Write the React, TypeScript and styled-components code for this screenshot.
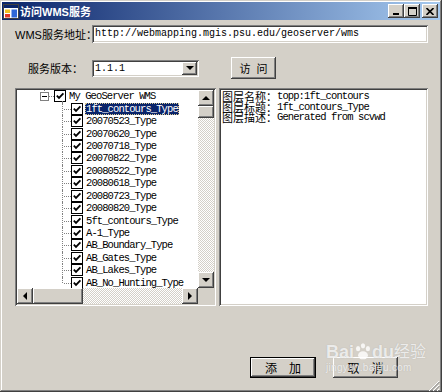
import React from 'react';
import styled, { createGlobalStyle, css } from 'styled-components';

const GlobalStyle = createGlobalStyle`
  html, body {
    margin: 0;
    padding: 0;
    background: #d4d0c8;
  }
  body {
    font-family: "Liberation Sans", "Noto Sans CJK SC", sans-serif;
    color: #000;
  }
`;

const raised = css`
  box-shadow: inset -1px -1px #404040, inset 1px 1px #ffffff, inset -2px -2px #808080, inset 2px 2px #d4d0c8;
`;

const sunken = css`
  box-shadow: inset 1px 1px #808080, inset -1px -1px #ffffff, inset 2px 2px #404040, inset -2px -2px #d4d0c8;
`;

const monoText = css`
  font-family: "Liberation Mono", "Noto Sans CJK SC", monospace;
  font-size: 10.5px;
  letter-spacing: -0.9px;
`;

const Window = styled.div`
  position: relative;
  width: 442px;
  height: 392px;
  box-sizing: border-box;
  padding: 2px;
  background: #d4d0c8;
  box-shadow: inset -1px -1px #404040, inset 1px 1px #d4d0c8, inset -2px -2px #808080, inset 2px 2px #ffffff;
  display: flex;
  flex-direction: column;
  overflow: hidden;
`;

const TitleBar = styled.div`
  height: 18px;
  display: flex;
  align-items: center;
  padding: 0 2px 0 1px;
  background: linear-gradient(to right, #0a246a, #a6caf0);
`;

const TitleText = styled.span`
  margin-left: 1px;
  color: #fff;
  font-size: 11px;
  font-weight: 700;
  white-space: nowrap;
`;

const Controls = styled.div`
  margin-left: auto;
  display: flex;
  align-items: center;
`;

const CtrlButton = styled.div<{ $gap?: boolean }>`
  width: 16px;
  height: 14px;
  margin-left: ${p => (p.$gap ? '2px' : '0')};
  background: #d4d0c8;
  ${raised};
  display: flex;
  align-items: center;
  justify-content: center;
`;

const Body = styled.div`
  flex: 1;
  display: flex;
  flex-direction: column;
  padding: 5px 12px 0 13px;
`;

const FieldRow = styled.div<{ $top?: number }>`
  display: flex;
  align-items: center;
  gap: 9px;
  margin-top: ${p => p.$top ?? 0}px;
`;

const Label = styled.span`
  width: 68px;
  flex-shrink: 0;
  text-align: right;
  font-size: 11px;
  white-space: nowrap;
`;

const TextField = styled.div`
  width: 336px;
  height: 18px;
  box-sizing: border-box;
  padding: 2px 3px;
  background: #fff;
  ${sunken};
  font-family: "Liberation Mono", monospace;
  font-size: 10px;
  line-height: 14px;
  white-space: nowrap;
  overflow: hidden;
`;

const Select = styled.div`
  width: 107px;
  height: 17px;
  box-sizing: border-box;
  padding: 2px;
  background: #fff;
  ${sunken};
  display: flex;
  align-items: stretch;
`;

const SelectValue = styled.span`
  flex: 1;
  padding-left: 1px;
  font-family: "Liberation Mono", monospace;
  font-size: 10px;
  line-height: 13px;
`;

const DropButton = styled.div`
  width: 15px;
  background: #d4d0c8;
  ${raised};
  display: flex;
  align-items: center;
  justify-content: center;
`;

const PushButton = styled.div<{ $w: number; $h: number; $default?: boolean }>`
  width: ${p => p.$w}px;
  height: ${p => p.$h}px;
  box-sizing: border-box;
  background: #d4d0c8;
  ${raised};
  ${p => p.$default && css`
    border: 1px solid #000;
  `}
  display: flex;
  align-items: center;
  justify-content: center;
  font-size: 12px;
  white-space: pre;
`;

const VisitButton = styled(PushButton)`
  margin-left: 23px;
  font-size: 11px;
`;

const Panels = styled.div`
  margin-top: 9px;
  display: flex;
  gap: 3px;
  height: 218px;
`;

const TreeBox = styled.div`
  width: 201px;
  box-sizing: border-box;
  padding: 2px;
  background: #fff;
  ${sunken};
  display: grid;
  grid-template-columns: 1fr 16px;
  grid-template-rows: 1fr 16px;
  overflow: hidden;
`;

const TreeList = styled.div`
  overflow: hidden;
`;

const TreeRow = styled.div<{ $indent: number }>`
  height: 12.45px;
  display: flex;
  align-items: center;
  padding-left: ${p => p.$indent}px;
  white-space: nowrap;
`;

const ExpandBox = styled.span`
  position: relative;
  width: 9px;
  height: 9px;
  box-sizing: border-box;
  border: 1px solid #808080;
  background: #fff;
  flex-shrink: 0;
  &::before {
    content: '';
    position: absolute;
    left: 3px;
    bottom: 100%;
    height: 3px;
    border-left: 1px dotted #808080;
  }
  &::after {
    content: '';
    position: absolute;
    left: 1px;
    top: 3px;
    width: 5px;
    height: 1px;
    background: #000;
  }
`;

const Stub = styled.span<{ $w: number }>`
  width: ${p => p.$w}px;
  align-self: center;
  border-top: 1px dotted #808080;
  flex-shrink: 0;
`;

const Branch = styled.span<{ $last?: boolean }>`
  position: relative;
  width: 9px;
  align-self: stretch;
  flex-shrink: 0;
  &::before {
    content: '';
    position: absolute;
    left: 0;
    top: 0;
    height: ${p => (p.$last ? '50%' : '100%')};
    border-left: 1px dotted #808080;
  }
  &::after {
    content: '';
    position: absolute;
    left: 2px;
    right: 0;
    top: 50%;
    border-top: 1px dotted #808080;
  }
`;

const CheckBox = styled.span<{ $root?: boolean }>`
  position: relative;
  width: 12px;
  height: 12px;
  box-sizing: border-box;
  border: 1px solid #000;
  background: #fff;
  margin-right: 2px;
  flex-shrink: 0;
  display: flex;
  align-items: center;
  justify-content: center;
  ${p => p.$root && css`
    &::after {
      content: '';
      position: absolute;
      left: 7px;
      top: 100%;
      height: 3px;
      border-left: 1px dotted #808080;
    }
  `}
`;

const NodeText = styled.span<{ $selected?: boolean }>`
  ${monoText};
  line-height: 12px;
  padding: 0 1px;
  ${p => p.$selected && css`
    background: #0a246a;
    color: #fff;
    outline: 1px dotted #d8c890;
    outline-offset: -1px;
  `}
`;

const VScroll = styled.div`
  display: flex;
  flex-direction: column;
`;

const HScroll = styled.div`
  display: flex;
`;

const ScrollButton = styled.div`
  width: 16px;
  height: 16px;
  flex-shrink: 0;
  box-sizing: border-box;
  background: #d4d0c8;
  ${raised};
  display: flex;
  align-items: center;
  justify-content: center;
`;

const Thumb = styled.div<{ $w: number; $h: number }>`
  width: ${p => p.$w}px;
  height: ${p => p.$h}px;
  flex-shrink: 0;
  background: #d4d0c8;
  ${raised};
`;

const Track = styled.div`
  flex: 1;
  background: repeating-conic-gradient(#ffffff 0 25%, #d4d0c8 0 50%) 0 0 / 2px 2px;
`;

const Corner = styled.div`
  background: #d4d0c8;
`;

const Arrow = styled.span<{ $dir: 'up' | 'down' | 'left' | 'right' }>`
  width: 0;
  height: 0;
  ${p =>
    p.$dir === 'up' || p.$dir === 'down'
      ? css`
          border-left: 4px solid transparent;
          border-right: 4px solid transparent;
          ${p.$dir === 'up' ? 'border-bottom' : 'border-top'}: 4px solid #000;
        `
      : css`
          border-top: 4px solid transparent;
          border-bottom: 4px solid transparent;
          ${p.$dir === 'left' ? 'border-right' : 'border-left'}: 4px solid #000;
        `}
`;

const InfoBox = styled.div`
  width: 209px;
  box-sizing: border-box;
  padding: 3px 2px 2px 3px;
  background: #fff;
  ${sunken};
  overflow: hidden;
`;

const InfoLine = styled.div`
  height: 10.5px;
  display: flex;
  align-items: center;
  white-space: nowrap;
`;

const InfoKey = styled.span`
  font-family: "Noto Sans CJK SC", sans-serif;
  font-size: 11px;
  line-height: 10.5px;
`;

const InfoValue = styled.span`
  ${monoText};
  line-height: 10.5px;
`;

const Footer = styled.div`
  margin-top: 51px;
  display: flex;
  justify-content: flex-end;
  gap: 17px;
  padding-right: 30px;
`;

const Grip = styled.div`
  position: absolute;
  right: 2px;
  bottom: 2px;
  width: 12px;
  height: 12px;
`;

const Watermark = styled.div`
  position: absolute;
  left: 326px;
  top: 342px;
  color: rgba(255, 255, 255, 0.75);
  text-shadow: 0 0 1px rgba(140, 140, 140, 0.5);
  pointer-events: none;
  white-space: nowrap;
`;

const MarkTitle = styled.div`
  display: flex;
  align-items: flex-end;
  font-size: 18px;
  font-weight: 700;
  line-height: 20px;
`;

const MarkCjk = styled.span`
  font-size: 16px;
  font-weight: 400;
`;

const MarkUrl = styled.div`
  font-size: 10px;
  line-height: 12px;
  letter-spacing: 0.3px;
`;

const AppIcon = () => (
  <svg width="16" height="15" viewBox="0 0 16 15">
    <rect x="0.5" y="0.5" width="15" height="14" fill="#ffffff" stroke="#404040" />
    <rect x="1" y="1" width="14" height="3" fill="#0a246a" />
    <rect x="2" y="5.5" width="5" height="3.5" fill="#f0c020" />
    <rect x="2" y="10" width="5" height="3.5" fill="#e03828" />
    <rect x="8.5" y="5.5" width="5.5" height="8" fill="#3068d8" />
  </svg>
);

const CheckMark = () => (
  <svg width="10" height="10" viewBox="0 0 10 10">
    <path d="M1.8 4.6 L4 6.9 L8.4 2.3" fill="none" stroke="#000" strokeWidth="1.8" />
  </svg>
);

const Paw = () => (
  <svg width="18" height="20" viewBox="0 0 22 24">
    <ellipse cx="5" cy="8" rx="2.6" ry="3.2" fill="rgba(255,255,255,0.8)" />
    <ellipse cx="11" cy="4.5" rx="2.6" ry="3.2" fill="rgba(255,255,255,0.8)" />
    <ellipse cx="17" cy="8" rx="2.6" ry="3.2" fill="rgba(255,255,255,0.8)" />
    <ellipse cx="11" cy="16" rx="6" ry="5" fill="rgba(255,255,255,0.8)" />
  </svg>
);

const children = [
  '1ft_contours_Type',
  '20070523_Type',
  '20070620_Type',
  '20070718_Type',
  '20070822_Type',
  '20080522_Type',
  '20080618_Type',
  '20080723_Type',
  '20080820_Type',
  '5ft_contours_Type',
  'A-1_Type',
  'AB_Boundary_Type',
  'AB_Gates_Type',
  'AB_Lakes_Type',
  'AB_No_Hunting_Type',
];

const info = [
  ['图层名称：', 'topp:1ft_contours'],
  ['图层标题：', '1ft_contours_Type'],
  ['图层描述：', 'Generated from scvwd'],
];

export default function App() {
  return (
    <>
      <GlobalStyle />
      <Window>
        <TitleBar>
          <AppIcon />
          <TitleText>访问WMS服务</TitleText>
          <Controls>
            <CtrlButton>
              <svg width="8" height="7" viewBox="0 0 8 7">
                <rect x="1" y="5" width="6" height="2" fill="#000" />
              </svg>
            </CtrlButton>
            <CtrlButton>
              <svg width="9" height="9" viewBox="0 0 9 9">
                <path d="M0.5 1.5 H8.5 V8.5 H0.5 Z" fill="none" stroke="#000" />
                <rect x="0" y="0" width="9" height="2" fill="#000" />
              </svg>
            </CtrlButton>
            <CtrlButton $gap>
              <svg width="8" height="7" viewBox="0 0 8 7">
                <path d="M0.5 0 L7.5 7 M7.5 0 L0.5 7" stroke="#000" strokeWidth="1.6" />
              </svg>
            </CtrlButton>
          </Controls>
        </TitleBar>

        <Body>
          <FieldRow>
            <Label>WMS服务地址：</Label>
            <TextField>http://webmapping.mgis.psu.edu/geoserver/wms</TextField>
          </FieldRow>

          <FieldRow $top={14}>
            <Label>服务版本：</Label>
            <Select>
              <SelectValue>1.1.1</SelectValue>
              <DropButton>
                <Arrow $dir="down" />
              </DropButton>
            </Select>
            <VisitButton $w={45} $h={22}>{'访  问'}</VisitButton>
          </FieldRow>

          <Panels>
            <TreeBox>
              <TreeList>
                <TreeRow $indent={23}>
                  <ExpandBox />
                  <Stub $w={5} />
                  <CheckBox $root>
                    <CheckMark />
                  </CheckBox>
                  <NodeText>My GeoServer WMS</NodeText>
                </TreeRow>
                {children.map((name, i) => (
                  <TreeRow key={name} $indent={45}>
                    <Branch $last={i === children.length - 1} />
                    <CheckBox>
                      <CheckMark />
                    </CheckBox>
                    <NodeText $selected={i === 0}>{name}</NodeText>
                  </TreeRow>
                ))}
              </TreeList>
              <VScroll>
                <ScrollButton>
                  <Arrow $dir="up" />
                </ScrollButton>
                <Thumb $w={16} $h={12} />
                <Track />
                <ScrollButton>
                  <Arrow $dir="down" />
                </ScrollButton>
              </VScroll>
              <HScroll>
                <ScrollButton>
                  <Arrow $dir="left" />
                </ScrollButton>
                <Thumb $w={50} $h={16} />
                <Track />
                <ScrollButton>
                  <Arrow $dir="right" />
                </ScrollButton>
              </HScroll>
              <Corner />
            </TreeBox>

            <InfoBox>
              {info.map(([k, v]) => (
                <InfoLine key={k}>
                  <InfoKey>{k}</InfoKey>
                  <InfoValue>{v}</InfoValue>
                </InfoLine>
              ))}
            </InfoBox>
          </Panels>

          <Footer>
            <PushButton $w={66} $h={21} $default>{'添\u3000加'}</PushButton>
            <PushButton $w={65} $h={21}>{'取\u3000消'}</PushButton>
          </Footer>
        </Body>

        <Watermark>
          <MarkTitle>
            <span>Bai</span>
            <Paw />
            <span>du</span>
            <MarkCjk>经验</MarkCjk>
          </MarkTitle>
          <MarkUrl>jingyan.baidu.com</MarkUrl>
        </Watermark>

        <Grip>
          <svg width="12" height="12" viewBox="0 0 12 12">
            <path d="M11 1 L1 11 M11 5 L5 11 M11 9 L9 11" stroke="#ffffff" strokeWidth="1" />
            <path d="M11.5 2 L2 11.5 M11.5 6 L6 11.5 M11.5 10 L10 11.5" stroke="#808080" strokeWidth="1" />
          </svg>
        </Grip>
      </Window>
    </>
  );
}
